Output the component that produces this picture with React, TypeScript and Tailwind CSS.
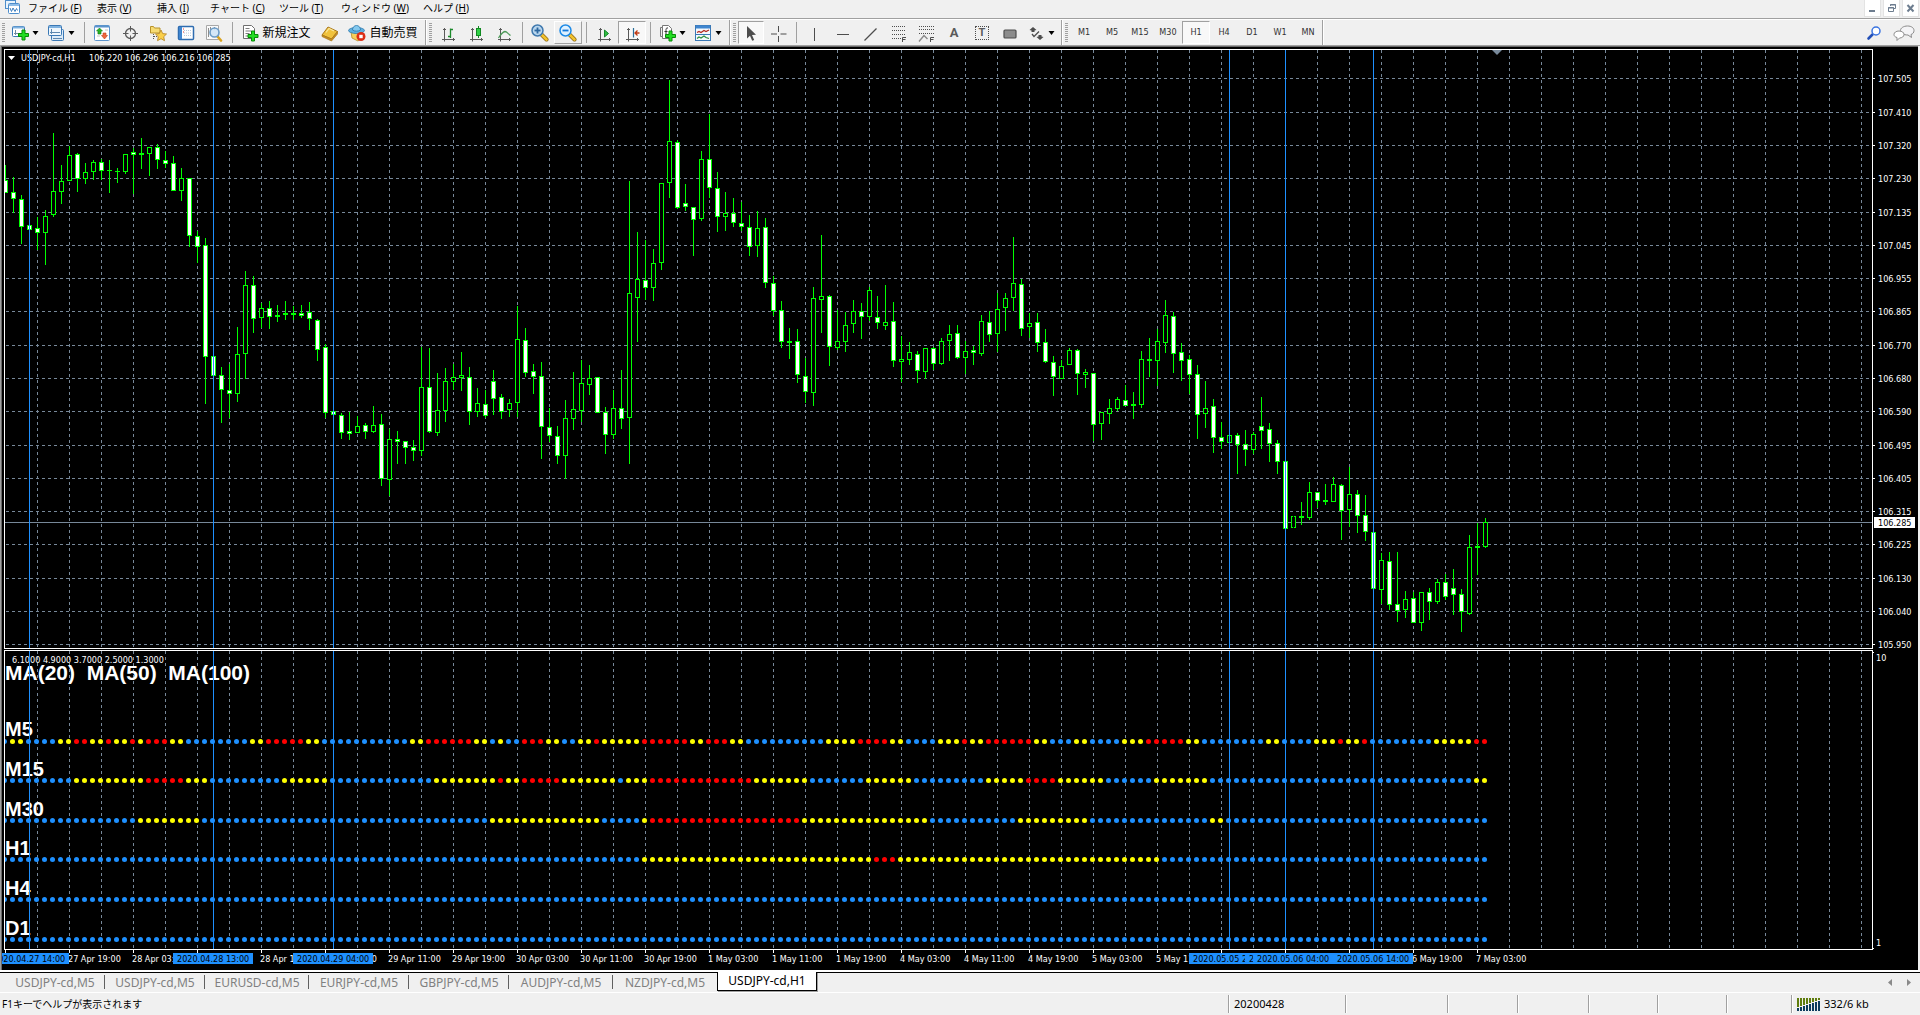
import { useState, type ReactNode } from "react";
import { clsx } from "clsx";

type Candle = [high: number, top: number, bottom: number, low: number, kind: "w" | "b" | "d"];

// w = bearish (filled), b = bullish (hollow), d = doji
const CANDLES: Candle[] = [
  [165, 180, 193, 193, "w"], [177, 192, 199, 213, "w"], [195, 199, 227, 244, "w"], [225, 225, 230, 230, "w"],
  [217, 228, 233, 250, "w"], [210, 216, 233, 265, "b"], [133, 191, 215, 217, "b"], [165, 181, 192, 204, "b"],
  [146, 155, 181, 181, "b"], [153, 154, 179, 192, "w"], [163, 172, 179, 184, "b"], [160, 162, 172, 180, "b"],
  [159, 162, 171, 180, "w"], [160, 170, 171, 193, "d"], [168, 171, 172, 183, "d"], [154, 154, 172, 174, "b"],
  [148, 152, 155, 194, "w"], [138, 153, 155, 169, "d"], [147, 147, 154, 176, "b"], [144, 147, 160, 169, "w"],
  [151, 160, 164, 168, "w"], [156, 163, 191, 191, "w"], [168, 178, 191, 201, "b"], [178, 178, 236, 247, "w"],
  [231, 236, 247, 263, "w"], [238, 245, 357, 404, "w"], [356, 356, 376, 376, "w"], [367, 375, 390, 423, "w"],
  [364, 390, 394, 418, "w"], [327, 354, 394, 402, "b"], [271, 285, 354, 379, "b"], [276, 285, 319, 333, "w"],
  [303, 308, 318, 328, "b"], [301, 308, 317, 329, "w"], [305, 315, 317, 322, "d"], [301, 313, 315, 320, "d"],
  [306, 313, 315, 320, "d"], [305, 313, 316, 318, "w"], [302, 312, 319, 330, "w"], [319, 320, 350, 361, "w"],
  [344, 347, 413, 418, "w"], [411, 411, 415, 415, "w"], [413, 415, 433, 439, "w"], [412, 431, 434, 440, "w"],
  [416, 426, 433, 433, "b"], [423, 425, 432, 439, "w"], [406, 425, 432, 433, "b"], [414, 424, 479, 486, "w"],
  [429, 439, 480, 496, "b"], [431, 439, 442, 464, "w"], [441, 441, 448, 464, "w"], [440, 447, 451, 461, "w"],
  [347, 387, 451, 456, "b"], [348, 387, 432, 433, "w"], [373, 410, 433, 436, "b"], [368, 381, 411, 422, "b"],
  [364, 377, 382, 390, "b"], [352, 375, 378, 391, "b"], [367, 377, 412, 425, "w"], [388, 403, 412, 417, "b"],
  [390, 404, 416, 418, "w"], [370, 381, 399, 415, "w"], [394, 397, 412, 419, "w"], [399, 403, 410, 417, "b"],
  [306, 339, 403, 417, "b"], [328, 340, 373, 377, "w"], [364, 371, 377, 394, "w"], [362, 376, 427, 459, "w"],
  [408, 427, 436, 442, "w"], [426, 436, 456, 464, "w"], [400, 418, 456, 479, "b"], [372, 409, 419, 430, "b"],
  [360, 383, 411, 422, "b"], [365, 378, 385, 395, "b"], [377, 377, 413, 413, "w"], [407, 412, 435, 454, "w"],
  [390, 408, 435, 439, "b"], [370, 408, 419, 429, "w"], [181, 293, 418, 464, "b"], [232, 279, 298, 342, "b"],
  [240, 280, 288, 300, "w"], [249, 263, 288, 301, "b"], [183, 183, 263, 270, "b"], [80, 141, 183, 198, "b"],
  [140, 142, 208, 209, "w"], [184, 203, 207, 211, "w"], [207, 207, 220, 256, "w"], [151, 159, 219, 221, "b"],
  [114, 159, 188, 198, "w"], [172, 188, 217, 232, "w"], [192, 213, 217, 231, "b"], [198, 213, 223, 227, "w"],
  [202, 223, 227, 231, "w"], [215, 227, 247, 256, "w"], [211, 228, 246, 257, "b"], [218, 227, 283, 288, "w"],
  [276, 283, 311, 316, "w"], [301, 310, 342, 348, "w"], [328, 341, 343, 359, "d"], [329, 341, 375, 383, "w"],
  [358, 376, 392, 403, "w"], [287, 298, 393, 406, "b"], [235, 296, 300, 333, "b"], [295, 296, 347, 366, "w"],
  [310, 341, 348, 350, "b"], [312, 325, 342, 352, "b"], [300, 311, 324, 333, "b"], [303, 311, 317, 339, "w"],
  [287, 290, 317, 321, "b"], [296, 317, 323, 329, "w"], [285, 322, 326, 330, "b"], [302, 321, 361, 367, "w"],
  [336, 359, 362, 382, "b"], [342, 352, 360, 365, "b"], [351, 354, 371, 383, "w"], [348, 348, 372, 379, "b"],
  [347, 348, 364, 370, "w"], [338, 341, 364, 365, "b"], [325, 334, 341, 361, "b"], [325, 333, 358, 359, "w"],
  [341, 351, 358, 374, "b"], [346, 350, 353, 365, "w"], [315, 321, 354, 356, "b"], [311, 322, 335, 342, "w"],
  [293, 309, 334, 352, "b"], [293, 298, 308, 331, "b"], [237, 283, 298, 311, "b"], [279, 284, 329, 336, "w"],
  [313, 323, 327, 338, "b"], [313, 322, 343, 352, "w"], [329, 342, 362, 363, "w"], [356, 362, 377, 396, "w"],
  [360, 366, 379, 379, "b"], [348, 350, 365, 365, "b"], [349, 350, 374, 395, "w"], [369, 372, 375, 388, "b"],
  [373, 373, 425, 441, "w"], [412, 412, 424, 440, "b"], [399, 408, 414, 424, "b"], [397, 399, 409, 411, "b"],
  [385, 400, 406, 406, "w"], [392, 404, 406, 419, "d"], [351, 359, 405, 408, "b"], [338, 359, 361, 377, "d"],
  [329, 341, 361, 386, "b"], [300, 315, 343, 353, "b"], [312, 316, 354, 373, "w"], [343, 352, 361, 381, "w"],
  [355, 359, 375, 394, "w"], [365, 374, 415, 439, "w"], [381, 408, 414, 428, "b"], [399, 406, 438, 453, "w"],
  [422, 437, 442, 449, "w"], [435, 435, 443, 443, "b"], [433, 435, 445, 474, "w"], [430, 444, 450, 466, "w"],
  [432, 434, 450, 454, "b"], [397, 426, 431, 449, "w"], [423, 429, 444, 462, "w"], [440, 443, 462, 474, "w"],
  [461, 461, 529, 529, "w"], [516, 516, 528, 528, "b"], [502, 516, 518, 525, "d"], [482, 492, 518, 520, "b"],
  [492, 492, 501, 508, "w"], [484, 500, 502, 505, "d"], [477, 484, 502, 502, "b"], [484, 485, 511, 540, "w"],
  [467, 494, 510, 527, "b"], [490, 494, 516, 533, "w"], [495, 515, 532, 541, "w"], [532, 532, 589, 589, "w"],
  [553, 560, 590, 604, "b"], [552, 561, 605, 610, "w"], [552, 604, 611, 622, "w"], [591, 599, 610, 618, "b"],
  [592, 598, 623, 623, "w"], [592, 592, 623, 631, "b"], [588, 592, 602, 620, "w"], [579, 582, 602, 604, "b"],
  [574, 582, 597, 600, "w"], [569, 588, 595, 615, "w"], [589, 594, 612, 632, "w"], [535, 547, 614, 615, "b"],
  [523, 546, 548, 575, "d"], [518, 522, 547, 548, "b"],
];

const PRICES: [number, string][] = [
  [78, "107.505"], [112, "107.410"], [145, "107.320"], [178, "107.230"], [212, "107.135"], [245, "107.045"],
  [278, "106.955"], [311, "106.865"], [345, "106.770"], [378, "106.680"], [411, "106.590"], [445, "106.495"],
  [478, "106.405"], [511, "106.315"], [544, "106.225"], [578, "106.130"], [611, "106.040"], [644, "105.950"],
];

// run lengths of the trend dots: B = blue, Y = yellow, R = red
const TRENDS = [
  {
    label: "M5", textY: 736, y: 741,
    runs: "B1 Y2 B4 Y2 R2 Y2 R1 Y2 R1 Y1 R3 Y2 B8 Y2 R5 Y2 B11 Y2 R6 Y2 B1 Y1 B2 R3 Y2 B2 Y2 R1 Y5 R6 Y2 R3 Y2 B10 Y4 R4 Y2 B4 Y3 R1 Y2 R6 Y2 B3 Y2 B4 Y3 R5 Y2 B8 Y2 B4 Y3 R1 Y2 R1 B8 Y5 R2",
  },
  {
    label: "M15", textY: 776, y: 780,
    runs: "B9 Y9 R5 Y3 B9 Y6 B13 Y8 R1 Y2 R5 Y7 B1 Y3 R13 Y7 B7 Y6 B9 Y5 R4 Y6 B6 Y7 B33 Y2",
  },
  { label: "M30", textY: 816, y: 820, runs: "B17 Y8 B36 Y14 B5 Y1 R19 Y16 B11 Y9 B15 Y2 B33" },
  { label: "H1", textY: 855, y: 859, runs: "B80 Y29 R3 Y33 B41" },
  { label: "H4", textY: 895, y: 899, runs: "B186" },
  { label: "D1", textY: 935, y: 939, runs: "B186" },
];

const DOT_COLORS: Record<string, string> = { B: "#1e90ff", Y: "#ffff00", R: "#ff0000" };

// one slot every 8 bars; null where a marker label covers the whole slot
const DATES = [
  null, "27 Apr 19:00", "28 Apr 03:00", null, "28 Apr 19:00", "29 Apr 03:00",
  "29 Apr 11:00", "29 Apr 19:00", "30 Apr 03:00", "30 Apr 11:00", "30 Apr 19:00", "1 May 03:00",
  "1 May 11:00", "1 May 19:00", "4 May 03:00", "4 May 11:00", "4 May 19:00", "5 May 03:00",
  "5 May 11:00", null, null, null, "6 May 19:00", "7 May 03:00",
];

const MARKERS: { x: number; label: string; color: string }[] = [
  { x: 29, label: "2020.04.27 14:00", color: "#1e90ff" },
  { x: 213, label: "2020.04.28 13:00", color: "#1e90ff" },
  { x: 333, label: "2020.04.29 04:00", color: "#1e90ff" },
  { x: 1229, label: "2020.05.05 20:00", color: "#1e90ff" },
  { x: 1285, label: "2020.05.06 03:00", color: "#1e90ff" },
  { x: 1293, label: "2020.05.06 04:00", color: "#000000" },
  { x: 1373, label: "2020.05.06 14:00", color: "#1e90ff" },
];

const GRID_X = Array.from({ length: 58 }, (_, i) => 37 + i * 32);

const MENUS = [
  { text: "ファイル", key: "F", width: "w-[69px]" },
  { text: "表示", key: "V", width: "w-[60px]" },
  { text: "挿入", key: "I", width: "w-[53px]" },
  { text: "チャート", key: "C", width: "w-[69px]" },
  { text: "ツール", key: "T", width: "w-[62px]" },
  { text: "ウィンドウ", key: "W", width: "w-[82px]" },
  { text: "ヘルプ", key: "H", width: "w-[60px]" },
];

const TABS = [
  { name: "USDJPY-cd,M5", width: "w-[100px]" },
  { name: "USDJPY-cd,M5", width: "w-[100px]" },
  { name: "EURUSD-cd,M5", width: "w-[104px]" },
  { name: "EURJPY-cd,M5", width: "w-[100px]" },
  { name: "GBPJPY-cd,M5", width: "w-[100px]" },
  { name: "AUDJPY-cd,M5", width: "w-[104px]" },
  { name: "NZDJPY-cd,M5", width: "w-[104px]" },
  { name: "USDJPY-cd,H1", width: "w-[100px]" },
];

const TIMEFRAMES = ["M1", "M5", "M15", "M30", "H1", "H4", "D1", "W1", "MN"];

const TINY = "font-['DejaVu_Sans_Condensed','DejaVu_Sans',sans-serif] text-[9px]";

function expandRuns(runs: string) {
  return runs.split(" ").flatMap((r) => Array<string>(Number(r.slice(1))).fill(r[0]));
}

/* ---------- toolbar pieces ---------- */

function Icon({ children, w = 18 }: { children: ReactNode; w?: number }) {
  return (
    <svg width={w} height={18} viewBox={`0 0 ${w} 18`} fill="none" className="shrink-0" aria-hidden>
      {children}
    </svg>
  );
}

function Caret() {
  return (
    <svg width={7} height={4} viewBox="0 0 7 4" className="shrink-0" aria-hidden>
      <path d="M0.5 0h6L3.5 4z" fill="#000" />
    </svg>
  );
}

function ToolButton({
  label,
  width = "w-7",
  state,
  children,
}: {
  label: string;
  width?: string;
  state?: "pressed" | "raised";
  children: ReactNode;
}) {
  return (
    <button
      aria-label={label}
      className={clsx(
        "flex h-[23px] shrink-0 items-center justify-center gap-[3px] border",
        width,
        state === "pressed" && "border-t-[#a0a0a0] border-l-[#a0a0a0] border-r-white border-b-white bg-[#f8f8f8]",
        state === "raised" && "border-t-white border-l-white border-r-[#a0a0a0] border-b-[#a0a0a0]",
        !state && "border-transparent",
      )}
    >
      {children}
    </button>
  );
}

function Separator() {
  return (
    <div className="flex w-2 shrink-0 justify-center">
      <div className="h-[21px] w-px bg-[#a0a0a0]" />
    </div>
  );
}

function Grip() {
  return <div className="h-5 w-[3px] shrink-0 bg-[repeating-linear-gradient(#a0a0a0_0_1px,transparent_1px_2px)]" />;
}

function GroupEdge() {
  return (
    <div className="flex h-full w-3 shrink-0 items-center pl-[3px]">
      <div className="mr-[2px] h-full w-[2px] border-r border-l border-r-white border-l-[#a0a0a0]" />
      <Grip />
    </div>
  );
}

function Plus({ x, y }: { x: number; y: number }) {
  return (
    <path
      transform={`translate(${x} ${y})`}
      d="M4 .5h3v3.500h3.500v3h-3.500v3.500h-3v-3.500h-3.500v-3h3.500z"
      fill="#22dd22"
      stroke="#078a07"
    />
  );
}

function Axes() {
  return (
    <g stroke="#5a5a5a">
      <path d="M5.500 4v13.500M3 15.500h13" />
      <path d="M4 5.500h3M14.500 14v3" />
    </g>
  );
}

function Magnifier({ minus, plus }: { minus?: boolean; plus?: boolean }) {
  return (
    <Icon>
      <path d="M10.500 10.500l5 5" stroke="#8a6410" strokeWidth="4" strokeLinecap="round" />
      <path d="M10.500 10.500l5 5" stroke="#f2c22c" strokeWidth="2.600" strokeLinecap="round" />
      <circle cx="6.500" cy="6.500" r="5.500" fill={plus ? "#b9d6ee" : "#dff1ff"} stroke={plus ? "#3f78ad" : "#1e8ae6"} strokeWidth="1.500" />
      {(minus || plus) && <path d="M3.500 6.500h6" stroke={plus ? "#2d68a0" : "#1478d8"} strokeWidth="1.800" />}
      {plus && <path d="M6.500 3.500v6" stroke="#2d68a0" strokeWidth="1.800" />}
    </Icon>
  );
}

function MainToolbar() {
  const [frame, setFrame] = useState("H1");

  return (
    <div className="flex h-[26px] items-center overflow-hidden border-t border-white bg-[#f0f0f0]">
      <div className="flex w-2 shrink-0 pl-[2px]">
        <Grip />
      </div>
      <ToolButton label="新規チャート" width="w-[34px]">
        <Icon>
          <rect x="1.500" y="2.500" width="12" height="10" rx="1" fill="#fff" stroke="#3a78b5" />
          <path d="M2 3.500h11" stroke="#7fb2e0" strokeWidth="2" />
          <path d="M4.500 6v5M3 9.500h5" stroke="#6f8aa3" />
          <Plus x={7} y={5.500} />
        </Icon>
        <Caret />
      </ToolButton>
      <ToolButton label="チャートの組表示" width="w-[38px]">
        <Icon>
          <rect x="4.500" y="5.500" width="12" height="11" rx="1" fill="#dcebf8" stroke="#3a78b5" />
          <rect x="1.500" y="1.500" width="13" height="10" rx="1" fill="#eef6fd" stroke="#3a78b5" />
          <path d="M2 3h12" stroke="#7fb2e0" strokeWidth="2" />
          <path d="M4.500 5v5M3 8.500h10M6 14.500h9" stroke="#5c88b0" />
        </Icon>
        <Caret />
      </ToolButton>
      <Separator />
      <ToolButton label="気配値表示">
        <Icon>
          <rect x="1.500" y="1.500" width="15" height="15" rx="1" fill="#fff" stroke="#5b93cc" />
          <path d="M2 2.500h14" stroke="#5b93cc" strokeWidth="2" />
          <path d="M4 6h2M4 9h2M4 12h3M12 6h3" stroke="#c5c5c5" />
          <path d="M6.500 4l3 3h-1.500v3h-3v-3h-1.500z" fill="#27b327" stroke="#128012" strokeWidth=".6" />
          <path d="M11.500 15l3-3.500h-1.500v-2.500h-3v2.500h-1.500z" fill="#f0663c" stroke="#c33f17" strokeWidth=".6" />
        </Icon>
      </ToolButton>
      <ToolButton label="データウィンドウ">
        <Icon>
          <circle cx="9.500" cy="9.500" r="5" stroke="#5a5a5a" strokeWidth="1.300" />
          <path d="M9.500 2v5.500M9.500 11.500v5.500M2 9.500h5.500M11.500 9.500h5.500" stroke="#5a5a5a" />
        </Icon>
      </ToolButton>
      <ToolButton label="ナビゲーター">
        <Icon>
          <path d="M1.500 9V2.500h3l1 1.500h5.500v5z" fill="#f7dc74" stroke="#b8922a" />
          <path d="M4.500 10v6M5 12.500h4" stroke="#555" strokeDasharray="1 1" />
          <path d="M12 6l1.700 3.600 3.800.4-2.800 2.700.8 4-3.500-2-3.500 2 .8-4L6.500 10l3.800-.4z" fill="#fbd04a" stroke="#b8892a" strokeWidth=".9" />
        </Icon>
      </ToolButton>
      <ToolButton label="ターミナル">
        <Icon>
          <rect x="1.500" y="2.500" width="15" height="13" rx="1" fill="#fff" stroke="#2e6cb0" strokeWidth="1.500" />
          <path d="M3.500 3v12" stroke="#3f85cf" strokeWidth="3" />
          <path d="M7 6.500h8M7 9h8M7 11.500h8" stroke="#b7c9dc" strokeDasharray="1 1" />
          <path d="M6 5h1M6 8h1" stroke="#d33" />
        </Icon>
      </ToolButton>
      <ToolButton label="ストラテジーテスター">
        <Icon>
          <path d="M1.500 1.500h12v14h-12z" fill="#fafafa" stroke="#a8a8a8" />
          <path d="M3.500 4v9M5.500 3v7M9.500 3v3" stroke="#8c8c8c" />
          <path d="M12.500 12.500l3.500 4" stroke="#d9a21e" strokeWidth="2.600" strokeLinecap="round" />
          <circle cx="9.500" cy="8.500" r="4.500" fill="#cfe4f6" fillOpacity=".9" stroke="#6b9cc7" strokeWidth="1.600" />
        </Icon>
      </ToolButton>
      <Separator />
      <ToolButton label="新規注文" width="w-20">
        <Icon>
          <path d="M2.500 1.500h8l3 3v10h-11z" fill="#fff" stroke="#6e6e6e" />
          <path d="M4.500 4.500h4M4.500 7h6M4.500 9.500h4M4.500 12h3" stroke="#7d7d7d" />
          <Plus x={6.500} y={6.500} />
        </Icon>
        <span className="text-[12px] leading-4 whitespace-nowrap">新規注文</span>
      </ToolButton>
      <ToolButton label="メタエディター">
        <Icon>
          <path d="M1 11l6-8 9.500 4.500-6 7.500z" fill="#f0c23c" stroke="#a8761a" />
          <path d="M1 11l9.500 4 6-7.500v2.500l-6 7-9.500-4.500z" fill="#c98f1e" stroke="#a8761a" strokeWidth=".7" />
          <path d="M5 8.500l3-4 5 2.500" stroke="#fbe79b" strokeWidth="1.200" />
        </Icon>
      </ToolButton>
      <ToolButton label="自動売買" width="w-[78px]">
        <Icon>
          <path d="M3 8l1 6 6 3 5-4-1-5z" fill="#f5cf5c" stroke="#b58a26" strokeWidth=".8" />
          <ellipse cx="8.500" cy="6.500" rx="8" ry="3" fill="#5fb0e0" stroke="#2b78ad" strokeWidth=".8" />
          <path d="M4.500 6c0-6 8-6 8 0-1.500 1.500-6.500 1.500-8 0z" fill="#83c8ee" stroke="#2b78ad" strokeWidth=".8" />
          <circle cx="13" cy="12.500" r="4.500" fill="#dd2f17" />
          <rect x="11.300" y="10.800" width="3.400" height="3.400" fill="#fff" />
        </Icon>
        <span className="text-[12px] leading-4 whitespace-nowrap">自動売買</span>
      </ToolButton>
      <GroupEdge />
      <ToolButton label="バーチャート">
        <Icon>
          <Axes />
          <path d="M11.500 4.500v9.500M11.500 5.500h2.500M9 12.500h2.500" stroke="#1c8a2c" strokeWidth="1.300" />
        </Icon>
      </ToolButton>
      <ToolButton label="ローソク足">
        <Icon>
          <Axes />
          <path d="M11.500 2v12" stroke="#128a22" />
          <rect x="9.500" y="4.500" width="4" height="7" fill="#2fd045" stroke="#128a22" />
        </Icon>
      </ToolButton>
      <ToolButton label="ラインチャート">
        <Icon>
          <Axes />
          <path d="M3.500 14c2-3 3.500-6 6.500-6.500 2 0 2.500 2 5.500 4" stroke="#4c9a58" strokeWidth="1.300" />
        </Icon>
      </ToolButton>
      <Separator />
      <ToolButton label="ズームイン">
        <Magnifier plus />
      </ToolButton>
      <ToolButton label="ズームアウト" state="raised">
        <Magnifier minus />
      </ToolButton>
      <Separator />
      <ToolButton label="自動スクロール">
        <Icon>
          <Axes />
          <path d="M9.500 6l4 3.500-4 3.500z" fill="#2ebd3f" stroke="#14862a" />
        </Icon>
      </ToolButton>
      <ToolButton label="チャートシフト" state="pressed">
        <Icon>
          <Axes />
          <path d="M10.500 4v9.500" stroke="#2b6f9b" strokeWidth="1.200" />
          <path d="M16.500 9h-4.500M14.500 6.500l-2.500 2.500 2.500 2.500" stroke="#c03a14" strokeWidth="1.300" />
        </Icon>
      </ToolButton>
      <Separator />
      <ToolButton label="インディケータ" width="w-9">
        <Icon>
          <path d="M4.500 1.500h6l3 3v10h-9z" fill="#fff" stroke="#777" />
          <path d="M2.500 3.500h2v9h-2z" fill="#eee" stroke="#777" />
          <path d="M10 4c-2-.5-2 1-2 2.500v5M6.500 7.500h3" stroke="#333" />
          <Plus x={7} y={6.500} />
        </Icon>
        <Caret />
      </ToolButton>
      <ToolButton label="定型チャート" width="w-9">
        <Icon>
          <rect x="1.500" y="1.500" width="15" height="15" fill="#f4f9fe" stroke="#3a78b5" />
          <path d="M2 3h14" stroke="#3f85cf" strokeWidth="3" />
          <path d="M3 8.500l2-1 2 1 3-2 2 1 3-1.500" stroke="#b3261e" strokeWidth="1.200" />
          <path d="M2 10.500h14" stroke="#3a78b5" />
          <path d="M3 14.500l2-1.500 2 1 3-2 2 1.500 3 1" stroke="#2c8f3c" strokeWidth="1.200" />
        </Icon>
        <Caret />
      </ToolButton>
      <GroupEdge />
      <ToolButton label="カーソル" width="w-[26px]" state="pressed">
        <Icon>
          <path d="M5 2v12.500l3-2.700 2.200 5 2-.9-2.200-4.800 4-.4z" fill="#4d4d4d" />
        </Icon>
      </ToolButton>
      <ToolButton label="クロスヘア">
        <Icon>
          <path d="M9.500 2v6M9.500 12v6M2 10h6M11.500 10h6" stroke="#4d4d4d" />
        </Icon>
      </ToolButton>
      <Separator />
      <ToolButton label="垂直線">
        <Icon>
          <path d="M9.500 4v13" stroke="#4d4d4d" />
        </Icon>
      </ToolButton>
      <ToolButton label="水平線">
        <Icon>
          <path d="M4 10.500h12" stroke="#4d4d4d" />
        </Icon>
      </ToolButton>
      <ToolButton label="トレンドライン">
        <Icon>
          <path d="M3.500 16.500l12-12" stroke="#4d4d4d" strokeWidth="1.200" />
        </Icon>
      </ToolButton>
      <ToolButton label="フィボナッチリトレースメント">
        <Icon>
          <path d="M3 2.500h13M3 6.500h13M3 10.500h13M3 14.500h9" stroke="#4d4d4d" strokeDasharray="1 1" />
          <path d="M13.500 18v-4.500h3.500M13.500 15.500h3" stroke="#4d4d4d" />
        </Icon>
      </ToolButton>
      <ToolButton label="フィボナッチファン">
        <Icon>
          <path d="M2 2.500h15M2 5.500h15M2 9.500h15" stroke="#4d4d4d" strokeDasharray="1 1" />
          <path d="M2 17.500l5-6 3.500 3.500" stroke="#888" strokeWidth="1.400" />
          <path d="M13.500 18v-4.500h3.500M13.500 15.500h3" stroke="#4d4d4d" />
        </Icon>
      </ToolButton>
      <ToolButton label="テキスト">
        <span className="font-['Roboto',sans-serif] text-[13px] leading-4 font-bold text-[#5a5a5a]">A</span>
      </ToolButton>
      <ToolButton label="ラベル">
        <span className="flex h-[14px] w-[14px] items-center justify-center border border-dotted border-[#4d4d4d] font-['Roboto',sans-serif] text-[11px] leading-3 font-bold text-[#5a5a5a]">
          T
        </span>
      </ToolButton>
      <ToolButton label="図形">
        <Icon>
          <rect x="3" y="6" width="12" height="8" rx="1" fill="#8c8c8c" stroke="#4d4d4d" strokeWidth="1.200" />
        </Icon>
      </ToolButton>
      <ToolButton label="矢印" width="w-[34px]">
        <Icon>
          <path d="M6 3l3.500 3-2 .5v1.500h-3v-1.500l-2-.5z" fill="#4d4d4d" />
          <path d="M5 10l2 2.500 5-5" stroke="#4d4d4d" strokeWidth="1.300" />
          <path d="M13 16l3.500-3-2-.5v-1.500h-3v1.500l-2 .5z" fill="#4d4d4d" />
        </Icon>
        <Caret />
      </ToolButton>
      <GroupEdge />
      {TIMEFRAMES.map((t) => (
        <button
          key={t}
          onClick={() => setFrame(t)}
          className={clsx(
            "h-[23px] w-7 shrink-0 border text-[#333]",
            TINY,
            frame === t
              ? "border-t-[#a0a0a0] border-l-[#a0a0a0] border-r-white border-b-white bg-[#f8f8f8]"
              : "border-transparent",
          )}
        >
          {t}
        </button>
      ))}
      <div className="h-full w-[2px] shrink-0 border-r border-l border-r-white border-l-[#a0a0a0]" />
      <div className="ml-auto flex shrink-0 items-center gap-[10px] pr-[5px]">
        <button aria-label="検索">
          <Icon>
            <path d="M3.500 14.500l4-4" stroke="#2350b8" strokeWidth="2.600" strokeLinecap="round" />
            <circle cx="11" cy="7" r="4" fill="#fff" stroke="#3b74e0" strokeWidth="1.500" />
          </Icon>
        </button>
        <button aria-label="チャット">
          <Icon w={22}>
            <path d="M14.500 2c4 0 6.500 2 6.500 4.500 0 2-1.200 3.500-3 4l.5 3-3.500-2.500c-5 0-7.500-2-7.500-4.500s3-4.500 7-4.500z" fill="#f4f4f6" stroke="#8a8a8a" />
            <path d="M6 7c3 0 5 1.500 5 3.500s-2 3.500-4.500 3.500l-2.500 2.500v-3c-2-.5-3-1.500-3-3 0-2 2-3.500 5-3.500z" fill="#fff" stroke="#8a8a8a" />
          </Icon>
        </button>
      </div>
    </div>
  );
}

function MenuBar() {
  return (
    <div className="flex h-[19px] border-b border-[#a0a0a0] bg-[#f0f0f0]">
      <div className="flex w-7 shrink-0 pl-1">
        <svg width={17} height={15} viewBox="0 0 17 15" fill="none" aria-hidden>
          <rect x="1.500" y=".5" width="10" height="8" fill="#e8f3fc" stroke="#4d8dcb" />
          <rect x="4.500" y="3.500" width="11" height="10" rx="1" fill="#fff" stroke="#4d8dcb" />
          <path d="M5 5h10" stroke="#8fbde8" strokeWidth="2" />
          <path d="M6 8l1.500 3.500L9 8l2 3.500 1.500-3 1 2" stroke="#3f7fc0" />
        </svg>
      </div>
      <nav className="flex">
        {MENUS.map((m) => (
          <button key={m.key} className={clsx("h-4 text-left text-[10px] leading-4 whitespace-nowrap", m.width)}>
            {m.text} (<u>{m.key}</u>)
          </button>
        ))}
      </nav>
      <div className="ml-auto flex gap-[2px] pr-px">
        <button aria-label="最小化" className="h-[17px] w-[17px] border border-t-0 border-[#e3e3e3] bg-white">
          <svg width={15} height={16} viewBox="0 0 15 16" aria-hidden>
            <path d="M4 10h6v2H4z" fill="#6d7d8f" />
          </svg>
        </button>
        <button aria-label="元に戻す" className="h-[17px] w-[17px] border border-t-0 border-[#e3e3e3] bg-white">
          <svg width={15} height={16} viewBox="0 0 15 16" fill="none" stroke="#6d7d8f" aria-hidden>
            <path d="M6.500 6V4.500h5v4H10M6 5h6" />
            <path d="M4.500 7.500h5v4h-5zM4 8h6" />
          </svg>
        </button>
        <button aria-label="閉じる" className="h-[17px] w-[17px] border border-t-0 border-[#e3e3e3] bg-white">
          <svg width={15} height={16} viewBox="0 0 15 16" aria-hidden>
            <path d="M4.500 5l6 6.500M10.500 5l-6 6.500" stroke="#6d7d8f" strokeWidth="2" />
          </svg>
        </button>
      </div>
    </div>
  );
}

/* ---------- chart ---------- */

function VerticalGrid({ y1, y2 }: { y1: number; y2: number }) {
  return (
    <g stroke="#778899" strokeDasharray="3 3" shapeRendering="crispEdges">
      {GRID_X.map((x) => (
        <line key={x} x1={x + 0.5} x2={x + 0.5} y1={y1} y2={y2} />
      ))}
    </g>
  );
}

function MarkerLines({ y1, y2 }: { y1: number; y2: number }) {
  return (
    <g shapeRendering="crispEdges">
      {MARKERS.map((m) => (
        <line key={m.x} x1={m.x + 0.5} x2={m.x + 0.5} y1={y1} y2={y2} stroke={m.color} />
      ))}
    </g>
  );
}

function CandleMark({ x, data }: { x: number; data: Candle }) {
  const [high, top, bottom, low, kind] = data;
  return (
    <>
      <rect x={x} y={high} width={1} height={low - high} fill="#00ff00" />
      <rect x={x - 2} y={top} width={5} height={bottom - top} fill="#00ff00" />
      {kind !== "d" && (
        <rect x={x - 1} y={top + 1} width={3} height={bottom - top - 2} fill={kind === "w" ? "#ffffff" : "#000000"} />
      )}
    </>
  );
}

function PriceChart() {
  return (
    <div className="flex">
      <div className="h-[600px] min-w-0 flex-1 border border-white">
        <svg width="100%" height="598" className="block">
          <g transform="translate(-5 -50)">
            <VerticalGrid y1={50} y2={648} />
            <g stroke="#778899" strokeDasharray="3 3" shapeRendering="crispEdges">
              {PRICES.map(([y]) => (
                <line key={y} x1={6} x2="110%" y1={y + 0.5} y2={y + 0.5} />
              ))}
            </g>
            <line x1={5} x2="110%" y1={522.5} y2={522.5} stroke="#778899" shapeRendering="crispEdges" />
            <g shapeRendering="crispEdges">
              {CANDLES.map((c, i) => (
                <CandleMark key={i} x={5 + i * 8} data={c} />
              ))}
            </g>
            <path d="M8 56h7l-3.500 4z" fill="#fff" />
            <text x={21} y={61} className={clsx(TINY, "fill-white")}>
              USDJPY-cd,H1
            </text>
            <text x={89} y={61} className={clsx(TINY, "fill-white")}>
              106.220 106.296 106.216 106.285
            </text>
            <path d="M1492 50h10l-5 5z" fill="#778899" />
            <MarkerLines y1={50} y2={648} />
          </g>
        </svg>
      </div>
      <svg width={45} height={600} className="block shrink-0">
        <g transform="translate(-1873 -49)">
          {PRICES.map(([y, label]) => (
            <g key={y}>
              <rect x={1873} y={y} width={2} height={1} fill="#fff" />
              <text x={1878} y={y + 4} className={clsx(TINY, "fill-white")}>
                {label}
              </text>
            </g>
          ))}
          <rect x={1874} y={517} width={41} height={11} fill="#fff" />
          <text x={1878} y={526} className={clsx(TINY, "fill-black")}>
            106.285
          </text>
        </g>
      </svg>
    </div>
  );
}

function TrendPanel() {
  return (
    <div className="mt-px flex">
      <div className="h-[300px] min-w-0 flex-1 border border-white">
        <svg width="100%" height="298" className="block">
          <g transform="translate(-5 -651)">
            <VerticalGrid y1={651} y2={949} />
            {TRENDS.map((t) => (
              <text
                key={t.label}
                x={5}
                y={t.textY}
                className="fill-white font-['Liberation_Sans',Arial,sans-serif] text-[20px] font-bold"
              >
                {t.label}
              </text>
            ))}
            <text x={12} y={663} className={clsx(TINY, "fill-white")}>
              6.1000 4.9000 3.7000 2.5000 1.3000
            </text>
            <text
              x={5}
              y={680}
              xmlSpace="preserve"
              className="fill-white font-['Liberation_Sans',Arial,sans-serif] text-[21px] font-bold whitespace-pre"
            >
              {"MA(20)  MA(50)  MA(100)"}
            </text>
            <MarkerLines y1={651} y2={949} />
            {TRENDS.map((t) => (
              <g key={t.label}>
                {expandRuns(t.runs).map((c, i) => (
                  <circle key={i} cx={4.5 + i * 8} cy={t.y + 0.5} r={2.5} fill={DOT_COLORS[c]} />
                ))}
              </g>
            ))}
          </g>
        </svg>
      </div>
      <svg width={45} height={300} className="block shrink-0">
        <g transform="translate(-1873 -650)">
          <rect x={1873} y={652} width={1} height={1} fill="#fff" />
          <text x={1876} y={661} className={clsx(TINY, "fill-white")}>10</text>
          <rect x={1873} y={948} width={1} height={1} fill="#fff" />
          <text x={1876} y={946} className={clsx(TINY, "fill-white")}>1</text>
        </g>
      </svg>
    </div>
  );
}

function DateAxis() {
  return (
    <svg width="100%" height="20" className="block">
      <g transform="translate(-2 -950)">
        {DATES.map((d, i) => (
          <g key={i}>
            <rect x={5 + i * 64} y={950} width={1} height={3} fill="#fff" />
            {d && (
              <text x={4 + i * 64} y={962} className={clsx(TINY, "fill-white")}>
                {d}
              </text>
            )}
          </g>
        ))}
        {MARKERS.map((m) => (
          <g key={m.x}>
            <rect x={m.x - 40} y={953} width={80} height={11} fill="#1e90ff" />
            <text x={m.x - 36} y={962} className={clsx(TINY, "fill-black")}>
              {m.label}
            </text>
          </g>
        ))}
      </g>
    </svg>
  );
}

/* ---------- bottom bars ---------- */

function ChartTabs() {
  const [active, setActive] = useState(7);

  return (
    <div className="flex h-[19px] items-start bg-[#f0f0f0] pl-[5px]">
      {TABS.map((tab, i) => (
        <button
          key={i}
          onClick={() => setActive(i)}
          className={clsx(
            "relative h-[19px] shrink-0 font-['Noto_Sans',sans-serif] text-[12px] leading-[18px] whitespace-nowrap",
            tab.width,
            i === active
              ? "-mt-px border-r border-b border-l border-black bg-white text-black shadow-[1px_1px_0_#a0a0a0]"
              : "text-[#808080]",
          )}
        >
          {tab.name}
          {i !== active && i !== active - 1 && <span className="absolute top-[2px] right-0 h-[14px] w-px bg-[#606060]" />}
        </button>
      ))}
      <div className="ml-auto flex h-full items-center gap-[15px] pr-[9px]">
        <button aria-label="前へ">
          <svg width={4} height={7} viewBox="0 0 4 7" className="block" aria-hidden>
            <path d="M4 0v7L0 3.500z" fill="#8a8a8a" />
          </svg>
        </button>
        <button aria-label="次へ">
          <svg width={4} height={7} viewBox="0 0 4 7" className="block" aria-hidden>
            <path d="M0 0v7l4-3.500z" fill="#8a8a8a" />
          </svg>
        </button>
      </div>
    </div>
  );
}

function StatusCell({ width, children }: { width: string; children?: ReactNode }) {
  return (
    <div className={clsx("flex h-[18px] shrink-0 items-center border-l border-[#a0a0a0] shadow-[inset_1px_0_0_#fff]", width)}>
      {children}
    </div>
  );
}

function StatusBar() {
  return (
    <footer className="flex h-[22px] items-center bg-[#f0f0f0]">
      <p className="min-w-0 flex-1 pl-[2px] text-[10px] leading-4 whitespace-nowrap">F1キーでヘルプが表示されます</p>
      <StatusCell width="w-[117px]">
        <span className="pl-[5px] font-['Noto_Sans',sans-serif] text-[11px]">20200428</span>
      </StatusCell>
      <StatusCell width="w-[102px]" />
      <StatusCell width="w-[70px]" />
      <StatusCell width="w-[71px]" />
      <StatusCell width="w-[69px]" />
      <StatusCell width="w-[69px]" />
      <StatusCell width="w-[65px]" />
      <StatusCell width="w-[129px]">
        <svg width={23} height={13} viewBox="0 0 23 13" className="ml-[5px]" shapeRendering="crispEdges" aria-hidden>
          {Array.from({ length: 8 }, (_, i) => (
            <g key={i}>
              <rect x={i * 3} y={0} width={2} height={9 - i} fill="#5f7d0e" />
              <rect x={i * 3} y={10 - i} width={2} height={3 + i} fill="#0b3c5d" />
            </g>
          ))}
        </svg>
        <span className="pl-1 font-['Noto_Sans',sans-serif] text-[11px]">332/6 kb</span>
      </StatusCell>
    </footer>
  );
}

export default function App() {
  return (
    <div className="flex min-h-screen flex-col overflow-hidden bg-[#f0f0f0] font-['Noto_Sans','Noto_Sans_CJK_JP',sans-serif] text-black">
      <MenuBar />
      <MainToolbar />
      <main className="border-t border-l border-[#a0a0a0] pr-[2px]">
        <div className="border-t border-l border-[#696969] bg-black pt-[2px]">
          <div className="pl-[2px]">
            <PriceChart />
            <TrendPanel />
          </div>
          <DateAxis />
        </div>
      </main>
      <div className="h-[2px] bg-white" />
      <div className="border-t border-b border-t-black border-b-white">
        <ChartTabs />
      </div>
      <StatusBar />
    </div>
  );
}
